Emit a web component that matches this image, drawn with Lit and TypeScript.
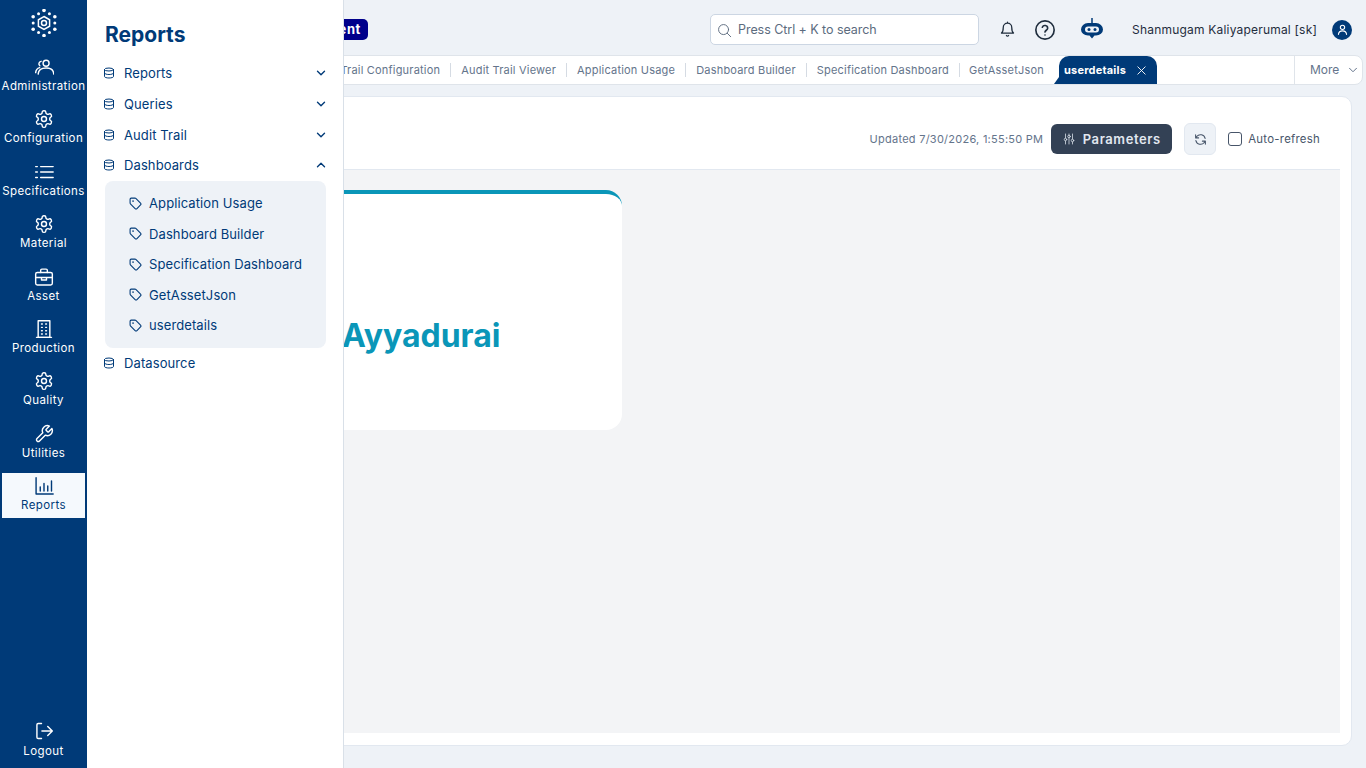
import { LitElement, html, css, svg } from "lit";
import { customElement } from "lit/decorators.js";

const ic = {
  users: svg`<circle cx="14.5" cy="7.5" r="3.6"/><path d="M5 20.5c.3-4.6 4-7.3 9.5-7.3s9 2.7 9.300 7.300"/><path d="M8.500 5.200a3 3 0 0 0-1.500 5.300M6.800 12.800c-2.700.8-4.500 3-4.800 6"/>`,
  gear: svg`<path d="M12.220 2h-.44a2 2 0 0 0-2 2v.18a2 2 0 0 1-1 1.730l-.43.25a2 2 0 0 1-2 0l-.15-.08a2 2 0 0 0-2.730.73l-.22.38a2 2 0 0 0 .73 2.730l.15.1a2 2 0 0 1 1 1.720v.51a2 2 0 0 1-1 1.740l-.15.09a2 2 0 0 0-.73 2.730l.22.38a2 2 0 0 0 2.730.73l.15-.08a2 2 0 0 1 2 0l.43.25a2 2 0 0 1 1 1.730V20a2 2 0 0 0 2 2h.44a2 2 0 0 0 2-2v-.18a2 2 0 0 1 1-1.730l.43-.25a2 2 0 0 1 2 0l.15.08a2 2 0 0 0 2.730-.73l.22-.39a2 2 0 0 0-.73-2.730l-.15-.08a2 2 0 0 1-1-1.740v-.5a2 2 0 0 1 1-1.740l.15-.09a2 2 0 0 0 .73-2.730l-.22-.38a2 2 0 0 0-2.730-.73l-.15.08a2 2 0 0 1-2 0l-.43-.25a2 2 0 0 1-1-1.730V4a2 2 0 0 0-2-2z"/><circle cx="12" cy="12" r="3"/>`,
  list: svg`<path d="M8 5.500h15M8 12h15M8 18.500h15M2 5.500h2M2 12h2M2 18.500h2"/>`,
  case: svg`<rect x="2" y="6.500" width="20" height="15" rx="2"/><path d="M8 6.500V4a1.500 1.500 0 0 1 1.500-1.500h5A1.500 1.500 0 0 1 16 4v2.500M2 12.500h20M9 12.500v3h6v-3"/>`,
  building: svg`<rect x="5" y="2" width="14" height="20"/><path d="M3 22h18M9 6h1M14 6h1M9 10h1M14 10h1M9 14h1M14 14h1M9 18h1M14 18h1"/>`,
  wrench: svg`<path d="M14.700 6.300a1 1 0 0 0 0 1.400l1.600 1.600a1 1 0 0 0 1.400 0l3.770-3.770a6 6 0 0 1-7.940 7.940l-6.910 6.910a2.120 2.120 0 0 1-3-3l6.910-6.910a6 6 0 0 1 7.940-7.940l-3.760 3.760z"/>`,
  chart: svg`<path d="M2.500 2v19.500H23M7.500 13v5M12 9v9M16.500 12v6M21 6v12"/>`,
  logout: svg`<path d="M9 3H5a1.500 1.500 0 0 0-1.500 1.500v15A1.500 1.500 0 0 0 5 21h4M9.500 12H22M16.500 6.500 22 12l-5.500 5.500"/>`,
  db: svg`<ellipse cx="12" cy="5" rx="9" ry="3"/><path d="M3 5v14c0 1.700 4 3 9 3s9-1.300 9-3V5M3 12c0 1.700 4 3 9 3s9-1.300 9-3"/>`,
  tag: svg`<path d="M12.586 2.586A2 2 0 0 0 11.172 2H4a2 2 0 0 0-2 2v7.172a2 2 0 0 0 .586 1.414l8.704 8.704a2.426 2.426 0 0 0 3.420 0l6.580-6.580a2.426 2.426 0 0 0 0-3.420z"/><circle cx="7.500" cy="7.500" r=".6"/>`,
  down: svg`<path d="m5 8.500 7 7 7-7"/>`,
  up: svg`<path d="m5 15.500 7-7 7 7"/>`,
  search: svg`<circle cx="10.500" cy="10.500" r="8"/><path d="m16.500 16.500 5.500 5.500"/>`,
  bell: svg`<path d="M12 3a6 6 0 0 0-6 6c0 6-2.500 8-2.500 8h17S18 15 18 9a6 6 0 0 0-6-6zM12 1.500V3M10.500 20.500a1.700 1.700 0 0 0 3 0"/>`,
  help: svg`<circle cx="12" cy="12" r="10"/><path d="M9.100 9a3 3 0 0 1 5.800 1c0 2-2.900 2.500-2.900 4.300M12 17.500h.01"/>`,
  sliders: svg`<path d="M5 2v8M5 16v6M12 2v2M12 10v12M19 2v10M19 18v4"/><circle cx="5" cy="13" r="2.500"/><circle cx="12" cy="7" r="2.500"/><circle cx="19" cy="15" r="2.500"/>`,
  refresh: svg`<path d="M20.500 10a8.800 8.800 0 0 0-15.500-3.500L3 9M3 3.500V9h5.500M3.500 14a8.800 8.800 0 0 0 15.500 3.500L21 15M21 20.500V15h-5.500"/>`,
  close: svg`<path d="M4 4l16 16M20 4 4 20"/>`,
};

type IconName = keyof typeof ic;

const icon = (name: IconName, cls = "") =>
  html`<svg class="ic ${cls}" viewBox="0 0 24 24">${ic[name]}</svg>`;

// hexagon of dots: corners and edge midpoints, round an inner ring
const hexCorners = Array.from({ length: 6 }, (_, i) => {
  const a = (i * Math.PI) / 3 - Math.PI / 2;
  return [14 + 12.5 * Math.cos(a), 14 + 12.5 * Math.sin(a)];
});
const logoDots = hexCorners.flatMap(([x, y], i) => {
  const [nx, ny] = hexCorners[(i + 1) % 6];
  return [
    svg`<circle cx=${x} cy=${y} r="1.800" fill="#fff"/>`,
    svg`<circle cx=${(x + nx) / 2} cy=${(y + ny) / 2} r="1.500" fill="#fff"/>`,
  ];
});

const railItems: { name: string; icon: IconName }[] = [
  { name: "Administration", icon: "users" },
  { name: "Configuration", icon: "gear" },
  { name: "Specifications", icon: "list" },
  { name: "Material", icon: "gear" },
  { name: "Asset", icon: "case" },
  { name: "Production", icon: "building" },
  { name: "Quality", icon: "gear" },
  { name: "Utilities", icon: "wrench" },
  { name: "Reports", icon: "chart" },
];

const subItems = ["Application Usage", "Dashboard Builder", "Specification Dashboard", "GetAssetJson", "userdetails"];

const tabs = ["Audit Trail Configuration", "Audit Trail Viewer", "Application Usage", "Dashboard Builder", "Specification Dashboard", "GetAssetJson"];

@customElement("app-root")
export class AppRoot extends LitElement {
  static styles = css`
    :host {
      display: block;
      position: relative;
      width: 1366px;
      height: 768px;
      overflow: hidden;
      background: #eef2f7;
      font-family: Inter, "Noto Sans", sans-serif;
      color: #003a78;
    }

    .ic {
      fill: none;
      stroke: currentColor;
      stroke-width: 2;
      stroke-linecap: round;
      stroke-linejoin: round;
      flex: none;
      display: block;
    }

    .app {
      display: flex;
      height: 768px;
    }

    /* left rail */
    .rail {
      width: 87px;
      flex: none;
      background: #003a78;
      color: #fff;
      display: flex;
      flex-direction: column;
      align-items: center;
      padding-bottom: 5px;
      box-sizing: border-box;
    }

    .logo {
      height: 54px;
      display: flex;
      align-items: center;
      padding-bottom: 8px;
      box-sizing: border-box;
    }

    .logo svg {
      width: 28px;
      height: 28px;
    }

    .rail-list {
      display: flex;
      flex-direction: column;
      gap: 7.4px;
      flex: 1;
      width: 83px;
    }

    .rail-item {
      height: 45px;
      display: flex;
      flex-direction: column;
      align-items: center;
      justify-content: flex-end;
      gap: 2px;
      padding-bottom: 6px;
      box-sizing: border-box;
      font-size: 11.500px;
      letter-spacing: 0.4px;
      white-space: nowrap;
    }

    .rail-item.logout {
      padding-bottom: 5px;
      gap: 3px;
    }

    .rail-item .ic {
      width: 20px;
      height: 20px;
      stroke-width: 1.700;
    }

    .rail-item.active {
      background: #f5f9fd;
      color: #003a78;
    }

    /* flyout over the page */
    .flyout {
      position: absolute;
      left: 87px;
      top: 0;
      bottom: 0;
      width: 257px;
      box-sizing: border-box;
      background: #fff;
      border-right: 1px solid #d9e0e8;
      padding: 0 17px 0 16px;
    }

    .flyout h2 {
      margin: 0;
      height: 58px;
      display: flex;
      align-items: center;
      padding: 10px 0 0 2px;
      box-sizing: border-box;
      font-size: 21px;
      font-weight: 700;
      color: #003a78;
    }

    .row {
      height: 30.700px;
      display: flex;
      align-items: center;
      font-size: 13px;
      letter-spacing: 0.100px;
      color: #003a78;
    }

    .row .db {
      width: 12px;
      height: 12px;
      margin-right: 9px;
      stroke-width: 2;
    }

    .row .chev {
      width: 12px;
      height: 12px;
      margin: 0 -1px 0 auto;
      stroke-width: 2.800;
    }

    .sub {
      margin: 0 0 0 2px;
      background: #eef2f7;
      border-radius: 8px;
      padding: 7px 0 7px 24px;
    }

    .sub-row {
      height: 30.600px;
      display: flex;
      align-items: center;
      gap: 7px;
      font-size: 13px;
      letter-spacing: 0.100px;
      color: #003a78;
    }

    .sub-row .ic {
      width: 13px;
      height: 13px;
      stroke-width: 2;
    }

    /* main column */
    .main {
      flex: 1;
      min-width: 0;
      display: flex;
      flex-direction: column;
      padding-right: 3px;
    }

    .topbar {
      height: 55px;
      flex: none;
      display: flex;
      align-items: center;
      padding-top: 4px;
      box-sizing: border-box;
      color: #1f2d3d;
    }

    .brand {
      width: 281px;
      flex: none;
      display: flex;
      justify-content: flex-end;
    }

    .badge {
      background: #00008b;
      color: #fff;
      font-size: 13px;
      font-weight: 700;
      letter-spacing: 0.600px;
      line-height: 21px;
      padding: 0 7px;
      border-radius: 5px;
    }

    .search {
      margin-left: 342px;
      width: 269px;
      height: 31px;
      box-sizing: border-box;
      display: flex;
      align-items: center;
      gap: 6px;
      padding: 0 0 1px 6px;
      background: #fff;
      border: 1px solid #ccd6e3;
      border-radius: 5px;
      font-size: 12.500px;
      letter-spacing: -0.050px;
      color: #5c6b7e;
    }

    .search .ic {
      width: 15px;
      height: 15px;
      stroke-width: 1.500;
      margin-top: 3px;
    }

    .bell {
      width: 17px;
      height: 17px;
      margin-left: 20px;
      stroke-width: 1.800;
    }

    .help {
      width: 22px;
      height: 22px;
      margin-left: 18px;
      stroke-width: 1.800;
    }

    .bot {
      width: 24px;
      height: 24px;
      margin: 0 0 2px 24px;
      color: #003a78;
    }

    .user {
      margin-left: 28px;
      font-size: 12px;
      letter-spacing: 0.200px;
      white-space: nowrap;
      width: 200px;
    }

    .avatar {
      width: 20px;
      height: 20px;
      border-radius: 50%;
      background: #003a78;
      color: #fff;
      display: flex;
      align-items: center;
      justify-content: center;
    }

    .avatar .ic {
      width: 13px;
      height: 13px;
      stroke-width: 2;
    }

    .tabs {
      height: 30px;
      flex: none;
      display: flex;
      box-sizing: border-box;
      background: #fff;
      border: 1px solid #dfe4ea;
      border-radius: 0 8px 8px 0;
      font-size: 11px;
      color: #64748b;
    }

    .tab-list {
      flex: 1;
      min-width: 0;
      display: flex;
      justify-content: flex-end;
      align-items: center;
      overflow: hidden;
      padding: 0 137px 1px 0;
      white-space: nowrap;
      letter-spacing: 0.200px;
    }

    .tab {
      padding: 0 10px;
      border-right: 1px solid #d5dbe3;
      line-height: 14px;
    }

    .tab.plain {
      border-right: none;
      padding: 0 15px 0 9px;
    }

    .tab.active {
      align-self: stretch;
      position: relative;
      display: flex;
      align-items: center;
      gap: 10px;
      width: 98px;
      box-sizing: border-box;
      padding: 0 0 0 5px;
      margin-bottom: -1px;
      background: #003a78;
      color: #fff;
      font-weight: 700;
      border: none;
      border-radius: 10px 10px 0 0;
    }

    .tab.active::before {
      content: "";
      position: absolute;
      left: -5px;
      bottom: 0;
      border-bottom: 7px solid #003a78;
      border-left: 5px solid transparent;
    }

    .tab.active .ic {
      width: 11px;
      height: 11px;
      stroke-width: 2;
    }

    .more {
      width: 68px;
      flex: none;
      box-sizing: border-box;
      border-left: 1px solid #dfe4ea;
      display: flex;
      align-items: center;
      gap: 8px;
      padding: 0 0 1px 15px;
      font-size: 12px;
    }

    .more .ic {
      width: 12px;
      height: 12px;
      stroke-width: 2;
    }

    .panel {
      margin: 11px 11px 22px 10px;
      flex: 1;
      min-height: 0;
      background: #fff;
      border: 1px solid #e2e8f0;
      border-radius: 10px;
      padding: 0 11px 12px 10px;
      display: flex;
      flex-direction: column;
    }

    .panel-head {
      height: 73px;
      flex: none;
      box-sizing: border-box;
      border-bottom: 1px solid #e2e8f0;
      display: flex;
      align-items: center;
      justify-content: flex-end;
      padding: 12px 20px 0 0;
      font-size: 11px;
      letter-spacing: 0.250px;
      color: #64748b;
    }

    .params {
      margin-left: 8px;
      width: 121px;
      height: 30px;
      border-radius: 6px;
      background: #334155;
      color: #e2e8f0;
      display: flex;
      align-items: center;
      justify-content: center;
      gap: 8px;
      font-size: 13px;
      font-weight: 600;
      letter-spacing: 0.600px;
    }

    .params .ic {
      width: 12px;
      height: 12px;
      stroke-width: 1.500;
    }

    .refresh {
      margin-left: 12px;
      width: 32px;
      height: 32px;
      box-sizing: border-box;
      border-radius: 6px;
      background: #eef2f7;
      border: 1px solid #e2e8f0;
      color: #475569;
      display: flex;
      align-items: center;
      justify-content: center;
    }

    .refresh .ic {
      width: 13px;
      height: 13px;
      stroke-width: 2;
    }

    .check {
      margin-left: 12px;
      width: 14px;
      height: 14px;
      box-sizing: border-box;
      border: 1px solid #475569;
      border-radius: 3px;
      background: #fff;
    }

    .check-label {
      margin-left: 6px;
      font-size: 11.400px;
      letter-spacing: 0.250px;
      color: #475569;
    }

    .canvas {
      flex: 1;
      min-height: 0;
      background: #f3f4f6;
      padding: 20px;
    }

    .widget {
      width: 494px;
      height: 240px;
      box-sizing: border-box;
      background: #fff;
      border-top: 4px solid #0a96b8;
      border-radius: 16px;
      padding: 121px 0 0 214px;
      font-size: 32px;
      font-weight: 700;
      line-height: 42px;
      color: #0a96b8;
    }
  `;

  render() {
    return html`
      <div class="app">
        <nav class="rail">
          <div class="logo">
            <svg viewBox="0 0 28 28">
              ${logoDots}
              <path d="M14 7.500l5.600 3.250v6.500L14 20.500l-5.600-3.250v-6.500z" fill="none" stroke="#fff" stroke-width="1.500"/>
              <circle cx="14" cy="14" r="2.500" fill="none" stroke="#fff" stroke-width="1.500"/>
            </svg>
          </div>
          <div class="rail-list">
            ${railItems.map(
              (r) => html`<div class="rail-item ${r.name === "Reports" ? "active" : ""}">${icon(r.icon)}<span>${r.name}</span></div>`
            )}
          </div>
          <div class="rail-item logout">${icon("logout")}<span>Logout</span></div>
        </nav>

        <main class="main">
          <header class="topbar">
            <div class="brand"><span class="badge">Development</span></div>
            <div class="search">${icon("search")}<span>Press Ctrl + K to search</span></div>
            ${icon("bell", "bell")}
            ${icon("help", "help")}
            <svg class="bot" viewBox="0 0 24 24">
              <path d="M12 1v5" stroke="currentColor" stroke-width="1.500"/>
              <path d="M8 6h8a7 6.500 0 0 1 7 6.500A7 6 0 0 1 16 18.500h-1.500L12 21.500l-2.500-3H8a7 6 0 0 1-7-6A7 6.500 0 0 1 8 6z" fill="currentColor"/>
              <rect x="5" y="9.500" width="14" height="6" rx="3" fill="#eef2f7"/>
              <circle cx="9" cy="12.500" r="1.500" fill="currentColor"/>
              <circle cx="15" cy="12.500" r="1.500" fill="currentColor"/>
            </svg>
            <span class="user">Shanmugam Kaliyaperumal [sk]</span>
            <div class="avatar">
              <svg class="ic" viewBox="0 0 24 24"><circle cx="12" cy="8" r="4"/><path d="M4.500 21c.5-4.500 3.500-6.500 7.500-6.500s7 2 7.500 6.500"/></svg>
            </div>
          </header>

          <div class="tabs">
            <div class="tab-list">
              ${tabs.map((t, i) => html`<span class="tab ${i === tabs.length - 1 ? "plain" : ""}">${t}</span>`)}
              <span class="tab active">userdetails ${icon("close")}</span>
            </div>
            <div class="more">More ${icon("down")}</div>
          </div>

          <section class="panel">
            <div class="panel-head">
              <span>Updated 7/30/2026, 1:55:50 PM</span>
              <div class="params">${icon("sliders")}<span>Parameters</span></div>
              <div class="refresh">${icon("refresh")}</div>
              <div class="check"></div>
              <span class="check-label">Auto-refresh</span>
            </div>
            <div class="canvas">
              <div class="widget">Ayyadurai</div>
            </div>
          </section>
        </main>

        <aside class="flyout">
          <h2>Reports</h2>
          ${["Reports", "Queries", "Audit Trail"].map(
            (n) => html`<div class="row">${icon("db", "db")}<span>${n}</span>${icon("down", "chev")}</div>`
          )}
          <div class="row">${icon("db", "db")}<span>Dashboards</span>${icon("up", "chev")}</div>
          <div class="sub">
            ${subItems.map((s) => html`<div class="sub-row">${icon("tag")}<span>${s}</span></div>`)}
          </div>
          <div class="row">${icon("db", "db")}<span>Datasource</span></div>
        </aside>
      </div>
    `;
  }
}
